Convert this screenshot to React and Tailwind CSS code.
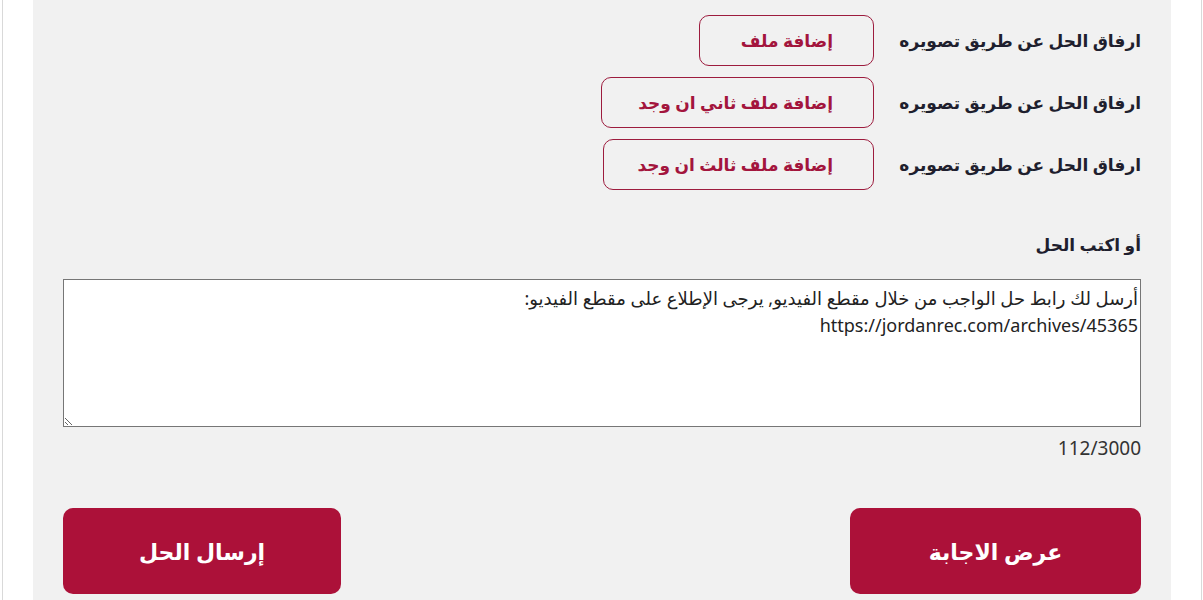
import React, { useState } from 'react';

const FONT = { fontFamily: "'Noto Sans', 'DejaVu Sans', sans-serif" };

const uploads = [
  { label: 'ارفاق الحل عن طريق تصويره', btn: 'إضافة ملف', w: 'w-[175px]' },
  { label: 'ارفاق الحل عن طريق تصويره', btn: 'إضافة ملف ثاني ان وجد', w: 'w-[273px]' },
  { label: 'ارفاق الحل عن طريق تصويره', btn: 'إضافة ملف ثالث ان وجد', w: 'w-[271px]' },
];

const INITIAL = 'أرسل لك رابط حل الواجب من خلال مقطع الفيديو, يرجى الإطلاع على مقطع الفيديو:\nhttps://jordanrec.com/archives/45365';

export default function App() {
  const [answer, setAnswer] = useState(INITIAL);

  return (
    <div dir="rtl" className="bg-white min-h-screen" style={FONT}>
      <div className="ml-[2px] mr-[1px] border-x border-[#d9d9d9] px-[30px]">
        <div className="bg-[#f1f1f1] px-[30px] pt-[15px] pb-[6px]">
          {/* upload rows */}
          <div className="flex flex-col gap-[11px]">
            {uploads.map((u, i) => (
              <div key={i} className="flex items-center">
                <span className="w-[267px] shrink-0 text-[17px] font-semibold text-[#1f1f2e]">{u.label}</span>
                <button className={`${u.w} h-[51px] rounded-[10px] border border-[#9d1c3e] pr-[40px] text-right text-[17px] font-semibold text-[#a3153d]`}>
                  {u.btn}
                </button>
              </div>
            ))}
          </div>

          <label className="mt-[42px] block text-[17px] font-semibold text-[#1f1f2e]">أو اكتب الحل</label>

          <textarea
            value={answer}
            onChange={e => setAnswer(e.target.value)}
            maxLength={3000}
            className="mt-[21px] block h-[148px] w-full resize-y border border-[#767676] bg-white px-[2px] pt-[5px] text-[18px] leading-[27px] text-[#222]"
          />
          <p className="mt-[7px] text-[19px] text-[#333]">
            <span dir="ltr">{answer.length}/3000</span>
          </p>

          <div className="mt-[46px] flex justify-between">
            <button className="h-[86px] w-[291px] rounded-[10px] bg-[#ac1139] text-[22px] font-bold text-white">عرض الاجابة</button>
            <button className="h-[86px] w-[278px] rounded-[10px] bg-[#ac1139] text-[22px] font-bold text-white">إرسال الحل</button>
          </div>
        </div>
      </div>
    </div>
  );
}
